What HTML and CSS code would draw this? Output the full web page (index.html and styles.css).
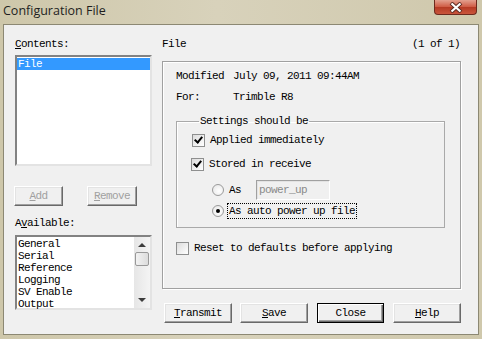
FILE: index.html
```html
<!DOCTYPE html>
<html lang="en">
<head>
  <meta charset="UTF-8">
  <title>Configuration File</title>
  <link rel="stylesheet" href="styles.css">
</head>
<body>
  <div class="window">
    <div class="titlebar">
      <span class="title">Configuration File</span>
      <span class="close-btn">
        <svg width="16" height="11" viewBox="0 0 16 11"><path d="M3 1 L13 10 M13 1 L3 10" stroke="#5a2a22" stroke-width="4"/><path d="M3.5 1.5 L12.5 9.5 M12.5 1.5 L3.5 9.5" stroke="#fff" stroke-width="2.2"/></svg>
      </span>
    </div>
    <div class="client">
      <div class="left-col">
        <div class="label"><u>C</u>ontents:</div>
        <div class="listbox contents">
          <div class="item selected">File</div>
        </div>
        <div class="btn-row">
          <span class="btn disabled add"><u>A</u>dd</span>
          <span class="btn disabled remove"><u>R</u>emove</span>
        </div>
        <div class="label available-label">A<u>v</u>ailable:</div>
        <div class="listbox available">
          <div class="items">
            <div class="item">General</div>
            <div class="item">Serial</div>
            <div class="item">Reference</div>
            <div class="item">Logging</div>
            <div class="item">SV Enable</div>
            <div class="item">Output</div>
          </div>
          <div class="scrollbar">
            <span class="arrow up"></span>
            <span class="thumb"></span>
            <span class="arrow down"></span>
          </div>
        </div>
      </div>
      <div class="right-col">
        <div class="header-row">
          <span>File</span>
          <span>(1 of 1)</span>
        </div>
        <div class="panel">
          <div class="info-row"><span class="info-key">Modified</span><span>July 09, 2011 09:44AM</span></div>
          <div class="info-row"><span class="info-key">For:</span><span>Trimble R8</span></div>
          <fieldset class="settings">
            <legend>Settings should be</legend>
            <div class="option check-row"><span class="checkbox checked"></span><span>Applied immediately</span></div>
            <div class="option check-row second"><span class="checkbox checked"></span><span>Stored in receive</span></div>
            <div class="option radio-row">
              <span class="radio"></span><span class="radio-label">As</span>
              <span class="textbox">power_up</span>
            </div>
            <div class="option radio-row last">
              <span class="radio checked"></span><span class="radio-label focused">As auto power up file</span>
            </div>
          </fieldset>
          <div class="option reset-row"><span class="checkbox"></span><span>Reset to defaults before applying</span></div>
        </div>
        <div class="action-row">
          <span class="btn"><u>T</u>ransmit</span>
          <span class="btn"><u>S</u>ave</span>
          <span class="btn default">Close</span>
          <span class="btn"><u>H</u>elp</span>
        </div>
      </div>
    </div>
  </div>
</body>
</html>
```

FILE: styles.css
```css
body {
  margin: 0;
  background: #d3ccb1;
  font-family: "Liberation Mono", monospace;
  font-size: 11px;
  letter-spacing: -0.6px;
  color: #000;
}
u {
  text-decoration: underline;
  text-underline-offset: 1px;
}
.window {
  width: 482px;
  height: 339px;
  background: linear-gradient(90deg, #cec7aa 0%, #d8d2bb 45%, #cfc8ac 100%);
}
.titlebar {
  height: 24px;
  display: flex;
  align-items: flex-start;
}
.title {
  font-family: "Open Sans", "Noto Sans", sans-serif;
  font-size: 12.5px;
  letter-spacing: 0;
  color: #1e1e1e;
  margin: 2px 0 0 3px;
}
.close-btn {
  margin-left: auto;
  margin-right: 5px;
  width: 43px;
  height: 15px;
  box-sizing: border-box;
  border: 1px solid #6d2a1e;
  border-top: none;
  border-radius: 0 0 4px 4px;
  background: linear-gradient(#e3a08f, #cf5a43 50%, #b53a24 51%, #c9553c);
  display: flex;
  align-items: center;
  justify-content: center;
}
.client {
  margin: 0 3px 0 3px;
  height: 311px;
  box-sizing: border-box;
  border: 1px solid #8c8873;
  background: #f0f0f0;
  display: flex;
}
.left-col {
  width: 137px;
  margin-left: 11px;
  padding-top: 13px;
}
.label {
  line-height: 12px;
  height: 12px;
}
.listbox {
  background: #fff;
  box-sizing: border-box;
  border: 2px solid;
  border-color: #828282 #e3e3e3 #e3e3e3 #828282;
  margin-top: 5px;
}
.listbox.contents {
  height: 111px;
  padding-top: 1px;
}
.item {
  line-height: 12px;
  height: 12px;
  padding-left: 1px;
  white-space: nowrap;
}
.item.selected {
  background: #3399ff;
  color: #fff;
}
.btn-row {
  display: flex;
  margin-top: 20px;
  margin-left: -1px;
  gap: 24px;
}
.btn {
  box-sizing: border-box;
  height: 20px;
  display: flex;
  align-items: center;
  justify-content: center;
  background: #f0f0f0;
  border: 1px solid;
  border-color: #fff #696969 #696969 #fff;
  box-shadow: inset -1px -1px 0 #a0a0a0, inset 1px 1px 0 #e3e3e3;
}
.btn.disabled {
  color: #a0a0a0;
}
.btn.add {
  width: 49px;
}
.btn.remove {
  width: 50px;
}
.available-label {
  margin-top: 11px;
}
.listbox.available {
  height: 75px;
  margin-top: 6px;
  display: flex;
}
.items {
  flex: 1;
  padding-top: 1px;
}
.scrollbar {
  width: 16px;
  background: linear-gradient(90deg, #e6e6e6, #f4f4f4);
  display: flex;
  flex-direction: column;
  align-items: center;
}
.arrow {
  width: 0;
  height: 0;
  border-left: 4px solid transparent;
  border-right: 4px solid transparent;
}
.arrow.up {
  border-bottom: 4px solid #3c3c3c;
  margin-top: 6px;
}
.arrow.down {
  border-top: 4px solid #3c3c3c;
  margin-top: auto;
  margin-bottom: 6px;
}
.thumb {
  width: 14px;
  height: 14px;
  box-sizing: border-box;
  margin-top: 5px;
  border: 1px solid #999;
  border-radius: 2px;
  background: linear-gradient(90deg, #f2f2f2, #dcdcdc);
}
.right-col {
  width: 299px;
  margin-left: 10px;
  padding-top: 13px;
}
.header-row {
  display: flex;
  justify-content: space-between;
  line-height: 12px;
  height: 12px;
  padding-right: 1px;
}
.panel {
  margin-top: 11px;
  height: 228px;
  box-sizing: border-box;
  border: 1px solid #a0a0a0;
  box-shadow: inset 1px 1px 0 #fff, 1px 1px 0 #fff;
  padding: 8px 0 0 13px;
}
.info-row {
  display: flex;
  line-height: 12px;
  height: 12px;
  margin-bottom: 9px;
}
.info-key {
  width: 57px;
}
.settings {
  margin: 12px 0 0 0;
  width: 269px;
  height: 113px;
  box-sizing: border-box;
  border: 1px solid #a9a9a9;
  box-shadow: inset 1px 1px 0 #fff;
  padding: 6px 0 0 15px;
}
.settings legend {
  padding: 0 1px;
  margin-left: 7px;
  line-height: 12px;
}
.option {
  display: flex;
  align-items: center;
  height: 14px;
  line-height: 12px;
}
.check-row .checkbox {
  margin-right: 5px;
}
.check-row.second {
  margin-top: 10px;
  margin-left: -1px;
}
.checkbox {
  width: 13px;
  height: 13px;
  box-sizing: border-box;
  border: 1px solid #8e8f8f;
  background: linear-gradient(135deg, #dcdcdc, #fff);
  position: relative;
}
.checkbox.checked::after {
  content: "";
  position: absolute;
  top: 0px;
  left: 3px;
  width: 3px;
  height: 6px;
  border: solid #000;
  border-width: 0 2px 2px 0;
  transform: rotate(40deg);
}
.radio-row {
  margin-left: 20px;
  margin-top: 12px;
}
.radio-row.last {
  margin-top: 7px;
}
.radio {
  width: 12px;
  height: 12px;
  box-sizing: border-box;
  border-radius: 50%;
  border: 1px solid #9a9a9a;
  background: radial-gradient(circle at 60% 60%, #fff, #e4e4e4);
  margin-right: 5px;
  display: flex;
  align-items: center;
  justify-content: center;
}
.radio.checked::after {
  content: "";
  width: 4px;
  height: 4px;
  border-radius: 50%;
  background: #000;
}
.radio-label.focused {
  outline: 1px dotted #000;
  outline-offset: 1px;
}
.textbox {
  margin-left: 15px;
  width: 74px;
  height: 20px;
  box-sizing: border-box;
  border: 1px solid;
  border-color: #a0a0a0 #fff #fff #a0a0a0;
  box-shadow: inset 1px 1px 0 #e3e3e3;
  color: #8a8a8a;
  padding: 3px 0 0 2px;
}
.reset-row {
  margin-top: 13px;
}
.reset-row .checkbox {
  margin-right: 5px;
}
.action-row {
  display: flex;
  margin-top: 14px;
  margin-left: 2px;
  gap: 8px;
}
.action-row .btn {
  width: 68px;
}
.btn.default {
  width: 67px;
  border: 1px solid #000;
  box-shadow: inset 1px 1px 0 #fff, inset -1px -1px 0 #696969, inset -2px -2px 0 #a0a0a0;
  margin-left: 1px;
  margin-right: 1px;
}
```
